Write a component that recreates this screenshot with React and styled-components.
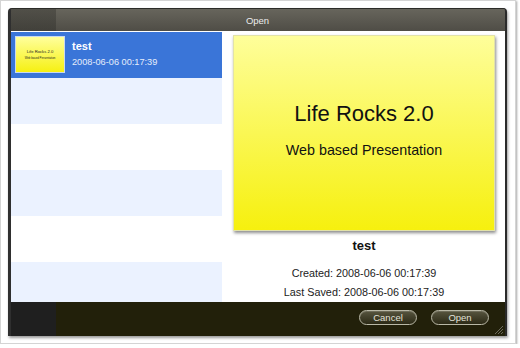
import styled, { createGlobalStyle } from 'styled-components';

const GlobalStyle = createGlobalStyle`
  html, body {
    margin: 0;
    padding: 0;
    background: #ffffff;
    font-family: "Liberation Sans", Arial, sans-serif;
  }
`;

// Cadre extérieur (capture)
const Frame = styled.div`
  box-sizing: border-box;
  width: 516px;
  height: 344px;
  padding: 7px;
  background: #ffffff;
  border: 1px solid #d4d4d4;
  box-shadow: 1px 1px 2px rgba(0, 0, 0, 0.35);
`;

const Dialog = styled.div`
  position: relative;
  box-sizing: border-box;
  width: 499px;
  height: 328px;
  display: flex;
  flex-direction: column;
  border-left: 3px solid #2f2f2f;
  border-right: 2px solid #2a2a2a;
  border-radius: 4px 4px 0 0;
  overflow: hidden;
  box-shadow: 1px 2px 3px rgba(0, 0, 0, 0.4);
  background: #2f2f2f;
`;

const TitleBar = styled.div`
  height: 23px;
  flex: none;
  display: flex;
  align-items: center;
  justify-content: center;
  margin-left: -3px;
  margin-right: -2px;
  background:
    linear-gradient(to right, rgba(40, 40, 36, 0.35) 0 48px, transparent 48px),
    linear-gradient(#67655c, #4f4d46);
  border-top: 1px solid #2c2c28;
  box-sizing: border-box;
  color: #ececec;
  font-size: 9.5px;
`;

const Body = styled.div`
  flex: 1;
  display: flex;
  background: #ffffff;
  min-height: 0;
`;

const List = styled.div`
  width: 211px;
  flex: none;
  padding-top: 1px;
  overflow: hidden;
`;

const Row = styled.div`
  height: 46px;
  box-sizing: border-box;
  display: flex;
  align-items: flex-start;
  gap: 7px;
  padding: 4px 0 0 4px;
  background: ${(p) => (p.$selected ? '#3a75d8' : p.$alt ? '#ebf2ff' : '#ffffff')};
`;

const Thumb = styled.div`
  width: 50px;
  height: 37px;
  box-sizing: border-box;
  border: 1px solid #c9d9f0;
  background: linear-gradient(#ffff9c, #f6f012);
  display: flex;
  flex-direction: column;
  align-items: center;
  padding-top: 12px;
  color: #222;
`;

const ThumbTitle = styled.div`
  font-size: 4.2px;
  line-height: 5px;
`;

const ThumbSub = styled.div`
  font-size: 2.8px;
  line-height: 3px;
  margin-top: 3px;
`;

const RowText = styled.div`
  padding-top: 3px;
  color: #ffffff;
`;

const RowName = styled.div`
  font-size: 11px;
  font-weight: bold;
  line-height: 14px;
`;

const RowDate = styled.div`
  font-size: 9.2px;
  line-height: 14px;
  margin-top: 2px;
  color: #e6edfb;
`;

const Details = styled.div`
  flex: 1;
  display: flex;
  flex-direction: column;
  align-items: center;
  padding: 4px 10px 0 11px;
  color: #222;
`;

const Preview = styled.div`
  width: 262px;
  height: 196px;
  flex: none;
  box-sizing: border-box;
  border: 1px solid #e2e2a8;
  background: linear-gradient(#fefe9a, #f6f00e);
  box-shadow: 1px 2px 3px rgba(0, 0, 0, 0.45);
  display: flex;
  flex-direction: column;
  align-items: center;
  padding-top: 65px;
  color: #111;
`;

const PreviewTitle = styled.div`
  font-size: 22px;
  line-height: 26px;
`;

const PreviewSub = styled.div`
  font-size: 14.3px;
  line-height: 18px;
  margin-top: 14px;
`;

const Name = styled.div`
  margin-top: 7px;
  font-size: 13px;
  font-weight: bold;
  line-height: 16px;
  color: #111;
`;

const Meta = styled.div`
  margin-top: 10px;
  font-size: 10.8px;
  line-height: 19px;
  text-align: center;
  color: #222;
`;

const Footer = styled.div`
  height: 34px;
  flex: none;
  box-sizing: border-box;
  display: flex;
  justify-content: flex-end;
  align-items: flex-start;
  gap: 14px;
  padding: 8px 16px 0 0;
  background: linear-gradient(to right, #1f1f1f 0 45px, #22200a 45px);
`;

const Button = styled.button`
  width: 58px;
  height: 15px;
  padding: 0;
  box-sizing: border-box;
  border: 1px solid #b9b8a6;
  border-radius: 8px;
  background: linear-gradient(#57553f, #2c2a16);
  box-shadow: inset 0 1px 0 rgba(255, 255, 255, 0.15);
  color: #e2e2da;
  font-family: "Liberation Sans", Arial, sans-serif;
  font-size: 9.5px;
  line-height: 13px;
`;

const Grip = styled.svg`
  position: absolute;
  right: 1px;
  bottom: 1px;
`;

const rows = [0, 1, 2, 3, 4, 5];

export default function App() {
  return (
    <>
      <GlobalStyle />
      <Frame>
        <Dialog>
          <TitleBar>Open</TitleBar>
          <Body>
            <List>
              {rows.map((i) =>
                i === 0 ? (
                  <Row key={i} $selected>
                    <Thumb>
                      <ThumbTitle>Life Rocks 2.0</ThumbTitle>
                      <ThumbSub>Web based Presentation</ThumbSub>
                    </Thumb>
                    <RowText>
                      <RowName>test</RowName>
                      <RowDate>2008-06-06 00:17:39</RowDate>
                    </RowText>
                  </Row>
                ) : (
                  <Row key={i} $alt={i % 2 === 1} />
                )
              )}
            </List>
            <Details>
              <Preview>
                <PreviewTitle>Life Rocks 2.0</PreviewTitle>
                <PreviewSub>Web based Presentation</PreviewSub>
              </Preview>
              <Name>test</Name>
              <Meta>
                <div>Created: 2008-06-06 00:17:39</div>
                <div>Last Saved: 2008-06-06 00:17:39</div>
              </Meta>
            </Details>
          </Body>
          <Footer>
            <Button>Cancel</Button>
            <Button>Open</Button>
          </Footer>
          <Grip width="11" height="11" viewBox="0 0 11 11">
            <g stroke="#6b6a5c" strokeWidth="1">
              <line x1="10" y1="2" x2="2" y2="10" />
              <line x1="10" y1="5" x2="5" y2="10" />
              <line x1="10" y1="8" x2="8" y2="10" />
            </g>
          </Grip>
        </Dialog>
      </Frame>
    </>
  );
}
